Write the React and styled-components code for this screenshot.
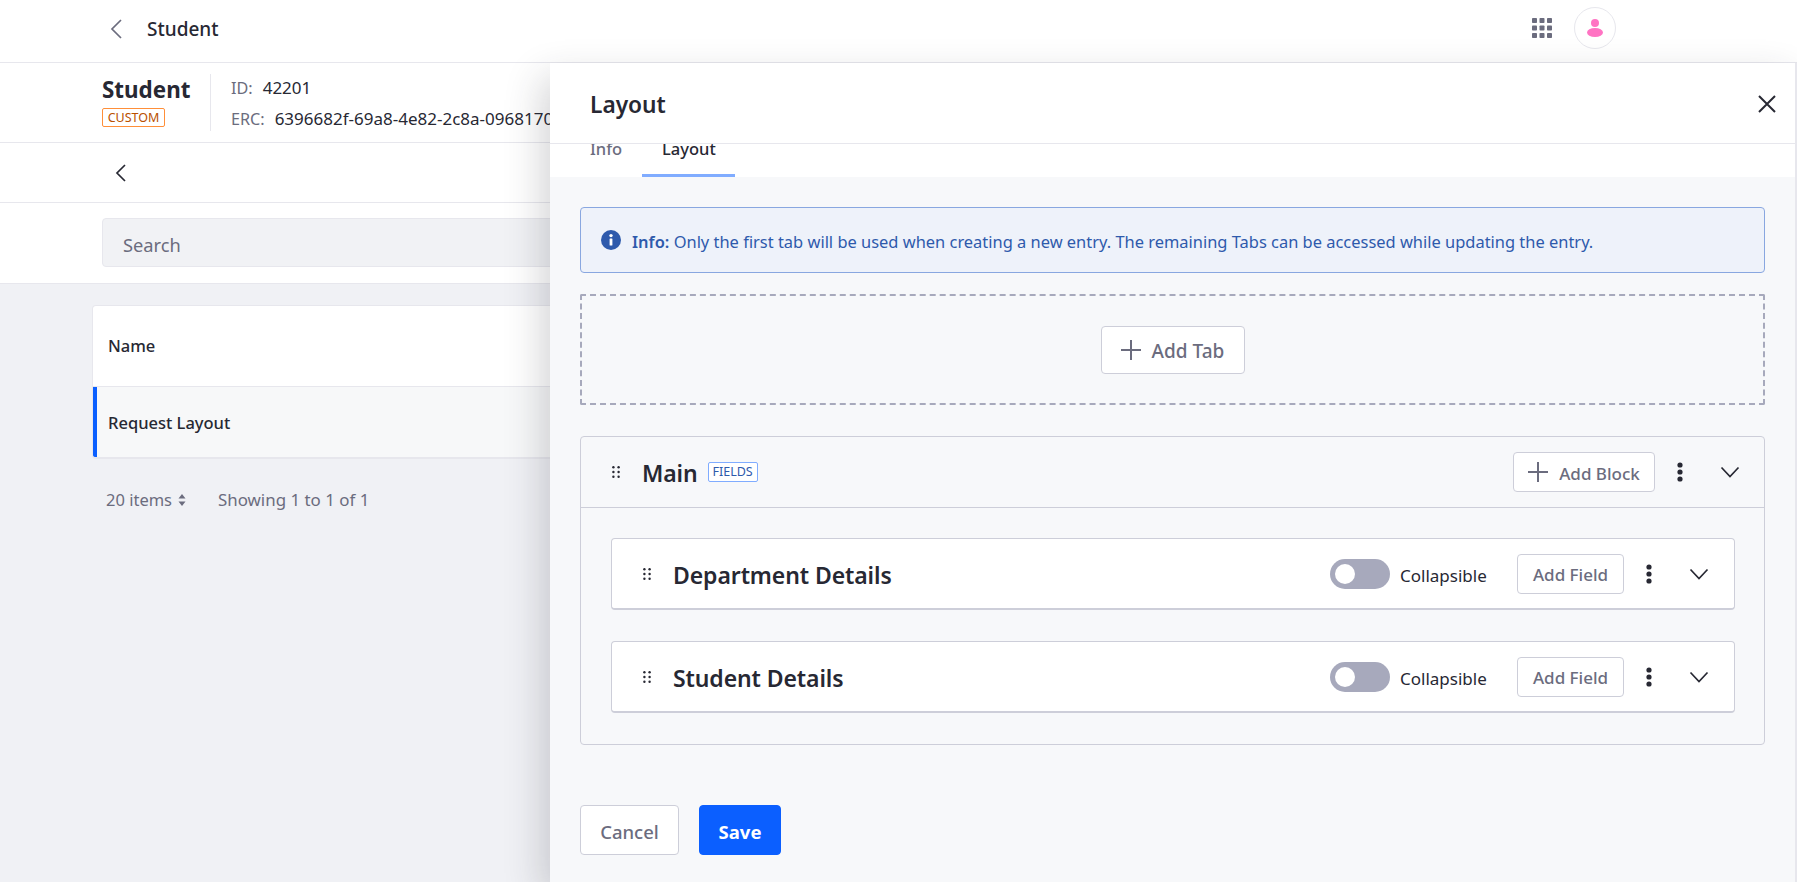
import React from "react";
import styled, { createGlobalStyle } from "styled-components";

const Global = createGlobalStyle`
  html, body { margin: 0; padding: 0; height: 100%; overflow: hidden; }
  body { font-family: "Noto Sans", "Open Sans", Arial, sans-serif; color: #272833; background: #f0f1f5; font-size: 16.5px; }
  * { box-sizing: border-box; }
`;

const Page = styled.div`
  position: relative;
  width: 1797px;
  height: 882px;
  overflow: hidden;
  background: #f0f1f5;
`;
const TopBar = styled.header`
  height: 63px;
  background: #fff;
  border-bottom: 1px solid #e7e7ed;
  display: flex;
  align-items: center;
  padding: 0 181px 0 108px;
`;
const BackIcon = styled.svg`
  width: 18px;
  height: 22px;
  fill: none;
  stroke: ${p => p.$dark ? "#272833" : "#6b6c7e"};
  stroke-width: 1.7;
  margin-top: ${p => p.$dark ? 0 : -4}px;
`;
const TopTitle = styled.div`
  margin-left: 21px;
  font-size: 19px;
  font-weight: 500;
  flex: 1;
  margin-top: -4px;
`;
const TopIcons = styled.div`
  display: flex;
  align-items: center;
  gap: 22px;
  margin-top: -6px;
`;
const GridIcon = styled.svg`
  width: 20px;
  height: 20px;
  fill: #6b6c7e;
`;
const Avatar = styled.div`
  width: 42px;
  height: 42px;
  border-radius: 50%;
  border: 1px solid #e7e7ed;
  background: #fff;
  display: flex;
  align-items: center;
  justify-content: center;
`;
const EntityBar = styled.div`
  height: 80px;
  background: #fff;
  border-bottom: 1px solid #e7e7ed;
  display: flex;
  align-items: center;
  padding-left: 102px;
`;
const EntityName = styled.div`
  width: 109px;
  height: 57px;
  border-right: 1px solid #e7e7ed;
  margin-right: 20px;
  display: flex;
  flex-direction: column;
  align-items: flex-start;
`;
const EntityTitle = styled.div`
  font-size: 22.4px;
  line-height: 30px;
  padding-top: 1px;
  height: 31px;
  font-weight: 700;
`;
const CustomBadge = styled.span`
  margin-top: 3px;
  width: 63px;
  height: 19px;
  border: 1px solid #ff8f39;
  border-radius: 2px;
  color: #b95000;
  font-size: 12.5px;
  line-height: 17px;
  text-align: center;
`;
const Meta = styled.div`
  display: flex;
  flex-direction: column;
  gap: 7px;
  padding-top: 1px;
  font-size: 16.2px;
`;
const MetaRow = styled.div`
  display: flex;
  gap: 10px;
  white-space: nowrap;
  line-height: 24px;
`;
const MetaKey = styled.span`
  color: #6b6c7e;
`;
const MetaValue = styled.span`
  font-size: 17px;
`;
const NavBar = styled.div`
  height: 60px;
  background: #fff;
  border-bottom: 1px solid #e7e7ed;
  display: flex;
  align-items: center;
  padding-left: 112px;
`;
const SearchBar = styled.div`
  height: 81px;
  background: #fff;
  border-bottom: 1px solid #e7e7ed;
  padding: 15px 102px 0;
`;
const SearchBox = styled.div`
  height: 49px;
  background: #f1f2f5;
  border: 1px solid #e7e7ed;
  border-radius: 4px;
  padding: 4px 20px 0;
  display: flex;
  align-items: center;
  font-size: 18.3px;
  color: #6b6c7e;
`;
const TableCard = styled.div`
  margin: 21px 93px 0 92px;
  height: 154px;
  background: #fff;
  border-radius: 4px;
  border: 1px solid #e7e7ed;
  border-bottom-width: 2px;
  overflow: hidden;
`;
const HeadRow = styled.div`
  height: 81px;
  display: flex;
  align-items: center;
  padding: 0 0 2px 15px;
  font-weight: 500;
  border-bottom: 1px solid #e7e7ed;
`;
const ActiveRow = styled.div`
  height: 71px;
  display: flex;
  align-items: center;
  padding-left: 11px;
  font-weight: 500;
  background: #f7f8f9;
  border-left: 4px solid #0b5fff;
`;
const Pager = styled.div`
  margin: 29px 0 0 106px;
  display: flex;
  align-items: center;
  color: #6b6c7e;
  line-height: 24px;
`;
const PagerCount = styled.span`
  width: 65px;
  white-space: nowrap;
`;
const PagerStatus = styled.span`
  font-size: 16.9px;
`;
const Caret = styled.svg`
  width: 8px;
  height: 12px;
  margin: 0 32px 0 7px;
  fill: #6b6c7e;
`;

const Drawer = styled.aside`
  position: absolute;
  left: 550px;
  top: 63px;
  width: 1247px;
  height: 819px;
  background: #f7f8fa;
  border-right: 2px solid #e7e7ed;
  box-shadow: -8px 14px 36px rgba(39, 40, 51, 0.2);
  display: flex;
  flex-direction: column;
`;
const DrawerHead = styled.div`
  height: 81px;
  flex: none;
  background: #fff;
  border-bottom: 1px solid #e7e7ed;
  display: flex;
  align-items: center;
  justify-content: space-between;
  padding: 2px 18px 0 40px;
`;
const DrawerTitle = styled.h2`
  margin: 0;
  font-size: 22.7px;
  font-weight: 600;
`;
const CloseIcon = styled.svg`
  width: 20px;
  height: 20px;
  stroke: #272833;
  stroke-width: 2;
  fill: none;
`;
const TabBar = styled.div`
  height: 33px;
  flex: none;
  background: #fff;
  overflow: hidden;
  display: flex;
  padding-left: 20px;
`;
const Tab = styled.div`
  width: ${p => p.$w}px;
  height: 33px;
  padding: 0 20px;
  border-bottom: 3px solid ${p => p.$active ? "#80acff" : "transparent"};
  color: ${p => p.$active ? "#272833" : "#6b6c7e"};
  font-weight: 500;
`;
const TabLabel = styled.div`
  margin-top: -7px;
  line-height: 24px;
`;
const DrawerBody = styled.div`
  padding: 30px 30px 0;
  display: flex;
  flex-direction: column;
`;
const InfoBox = styled.div`
  height: 66px;
  background: #eef2fa;
  border: 1px solid #89a7e0;
  border-radius: 4px;
  color: #2e5aac;
  font-size: 16.45px;
  display: flex;
  align-items: center;
  padding-left: 20px;
  gap: 11px;
`;
const InfoText = styled.div`
  padding-top: 2px;
  strong { font-weight: 600; }
`;
const DropZone = styled.div`
  margin-top: 21px;
  height: 111px;
  border: 2px dashed #a7a9bc;
  border-radius: 2px;
  display: flex;
  align-items: center;
  justify-content: center;
`;
const Button = styled.button`
  height: ${p => p.$h || 40}px;
  width: ${p => p.$w}px;
  background: #fff;
  border: 1px solid #cdced9;
  border-radius: 4px;
  color: #6b6c7e;
  font: inherit;
  font-size: ${p => p.$size || 17}px;
  font-weight: 500;
  display: flex;
  flex: none;
  align-items: center;
  justify-content: center;
  gap: 11px;
  padding: 0;
`;
const SaveButton = styled(Button)`
  background: #0b5fff;
  border-color: #0b5fff;
  color: #fff;
  font-weight: 700;
`;
const ButtonLabel = styled.span`
  padding-top: 2px;
`;
const PlusIcon = styled.svg`
  width: 20px;
  height: 20px;
  stroke: #6b6c7e;
  stroke-width: 2;
  fill: none;
`;
const MainCard = styled.section`
  margin-top: 31px;
  height: 309px;
  border: 1px solid #cdced9;
  border-radius: 4px;
`;
const MainHead = styled.div`
  height: 71px;
  border-bottom: 1px solid #cdced9;
  display: flex;
  align-items: center;
  padding: 0 24px 0 25px;
`;
const MainBody = styled.div`
  padding: 30px 29px 0 30px;
  display: flex;
  flex-direction: column;
  gap: 31px;
`;
const BlockCard = styled.div`
  height: 72px;
  background: #fff;
  border: 1px solid #cdced9;
  border-bottom-width: 2px;
  border-radius: 4px;
  display: flex;
  align-items: center;
  padding: 0 25px 0 25px;
`;
const HandleIcon = styled.svg`
  width: 20px;
  height: 20px;
  flex: none;
  fill: #272833;
`;
const BlockTitle = styled.div`
  margin-left: 16px;
  padding-top: 2px;
  font-size: 23px;
  font-weight: 600;
  letter-spacing: -0.1px;
`;
const FieldsBadge = styled.span`
  margin-left: 10px;
  height: 20px;
  width: 50px;
  border: 1px solid #80acff;
  border-radius: 2px;
  background: #fff;
  color: #2e5aac;
  font-size: 12.5px;
  line-height: 18px;
  text-align: center;
`;
const Spacer = styled.div`
  flex: 1;
`;
const Toggle = styled.div`
  width: 60px;
  height: 30px;
  border-radius: 15px;
  background: #a7a9bc;
  padding: 5px;
`;
const Knob = styled.div`
  width: 20px;
  height: 20px;
  border-radius: 50%;
  background: #fff;
`;
const ToggleLabel = styled.span`
  margin: 0 30px 0 10px;
  padding-top: 3px;
  width: 87px;
  font-size: 17px;
  white-space: nowrap;
`;
const DotsIcon = styled.svg`
  width: 20px;
  height: 24px;
  flex: none;
  margin-left: 15px;
  fill: #272833;
`;
const ChevronIcon = styled.svg`
  width: 20px;
  height: 20px;
  flex: none;
  margin-left: 30px;
  stroke: #272833;
  stroke-width: 1.7;
  fill: none;
`;
const Footer = styled.div`
  margin-top: 60px;
  display: flex;
  gap: 20px;
`;

const Handle = () => (
  <HandleIcon viewBox="0 0 20 20">
    {[5.2, 10, 14.8].map(y => [7.4, 12.6].map(x => <circle key={`${x}-${y}`} cx={x} cy={y} r="1.2" />))}
  </HandleIcon>
);
const Dots = () => (
  <DotsIcon viewBox="0 0 20 24">
    <circle cx="10" cy="5" r="2.6" /><circle cx="10" cy="12" r="2.6" /><circle cx="10" cy="19" r="2.6" />
  </DotsIcon>
);
const Chevron = () => (
  <ChevronIcon viewBox="0 0 20 20"><path d="M1.5 5.5l8.5 9 8.5-9" /></ChevronIcon>
);
const Plus = () => (
  <PlusIcon viewBox="0 0 20 20"><path d="M10 0v20M0 10h20" /></PlusIcon>
);
const Block = ({ title }) => (
  <BlockCard>
    <Handle />
    <BlockTitle>{title}</BlockTitle>
    <Spacer />
    <Toggle><Knob /></Toggle>
    <ToggleLabel>Collapsible</ToggleLabel>
    <Button $w={107} $h={40}><ButtonLabel>Add Field</ButtonLabel></Button>
    <Dots />
    <Chevron />
  </BlockCard>
);

export default function App() {
  return (
    <Page>
      <Global />
      <TopBar>
        <BackIcon viewBox="0 0 18 22"><path d="M13 2l-9 9 9 9" /></BackIcon>
        <TopTitle>Student</TopTitle>
        <TopIcons>
          <GridIcon viewBox="0 0 20 20">
            {[0, 7.5, 15].map(y => [0, 7.5, 15].map(x => <rect key={`${x}-${y}`} x={x} y={y} width="5" height="5" rx="0.8" />))}
          </GridIcon>
          <Avatar>
            <svg width="16" height="18" viewBox="0 0 16 18" fill="#ff73c3">
              <circle cx="8" cy="4" r="4" />
              <ellipse cx="8" cy="13.5" rx="8" ry="4.5" />
            </svg>
          </Avatar>
        </TopIcons>
      </TopBar>
      <EntityBar>
        <EntityName>
          <EntityTitle>Student</EntityTitle>
          <CustomBadge>CUSTOM</CustomBadge>
        </EntityName>
        <Meta>
          <MetaRow><MetaKey>ID:</MetaKey><MetaValue>42201</MetaValue></MetaRow>
          <MetaRow><MetaKey>ERC:</MetaKey><MetaValue>6396682f-69a8-4e82-2c8a-09681700</MetaValue></MetaRow>
        </Meta>
      </EntityBar>
      <NavBar>
        <BackIcon $dark viewBox="0 0 18 22"><path d="M13 3l-8 8 8 8" /></BackIcon>
      </NavBar>
      <SearchBar><SearchBox>Search</SearchBox></SearchBar>
      <TableCard>
        <HeadRow>Name</HeadRow>
        <ActiveRow>Request Layout</ActiveRow>
      </TableCard>
      <Pager>
        <PagerCount>20 items</PagerCount>
        <Caret viewBox="0 0 8 12"><path d="M4 0l3.5 4.5h-7zM4 12L.5 7.5h7z" /></Caret>
        <PagerStatus>Showing 1 to 1 of 1</PagerStatus>
      </Pager>

      <Drawer>
        <DrawerHead>
          <DrawerTitle>Layout</DrawerTitle>
          <CloseIcon viewBox="0 0 20 20"><path d="M2 2l16 16M18 2L2 18" /></CloseIcon>
        </DrawerHead>
        <TabBar>
          <Tab $w={72}><TabLabel>Info</TabLabel></Tab>
          <Tab $w={93} $active><TabLabel>Layout</TabLabel></Tab>
        </TabBar>
        <DrawerBody>
          <InfoBox>
            <svg width="20" height="20" viewBox="0 0 20 20">
              <circle cx="10" cy="10" r="10" fill="#2e5aac" />
              <rect x="8.6" y="8.5" width="2.8" height="7" rx="0.6" fill="#fff" />
              <circle cx="10" cy="5.6" r="1.7" fill="#fff" />
            </svg>
            <InfoText><strong>Info:</strong> Only the first tab will be used when creating a new entry. The remaining Tabs can be accessed while updating the entry.</InfoText>
          </InfoBox>
          <DropZone>
            <Button $w={144} $h={48} $size={19}><Plus /><ButtonLabel>Add Tab</ButtonLabel></Button>
          </DropZone>
          <MainCard>
            <MainHead>
              <Handle />
              <BlockTitle>Main</BlockTitle>
              <FieldsBadge>FIELDS</FieldsBadge>
              <Spacer />
              <Button $w={142} $h={40}><Plus /><ButtonLabel>Add Block</ButtonLabel></Button>
              <Dots />
              <Chevron />
            </MainHead>
            <MainBody>
              <Block title="Department Details" />
              <Block title="Student Details" />
            </MainBody>
          </MainCard>
          <Footer>
            <Button $w={99} $h={50} $size={18.5}><ButtonLabel>Cancel</ButtonLabel></Button>
            <SaveButton $w={82} $h={50} $size={18.5}><ButtonLabel>Save</ButtonLabel></SaveButton>
          </Footer>
        </DrawerBody>
      </Drawer>
    </Page>
  );
}
